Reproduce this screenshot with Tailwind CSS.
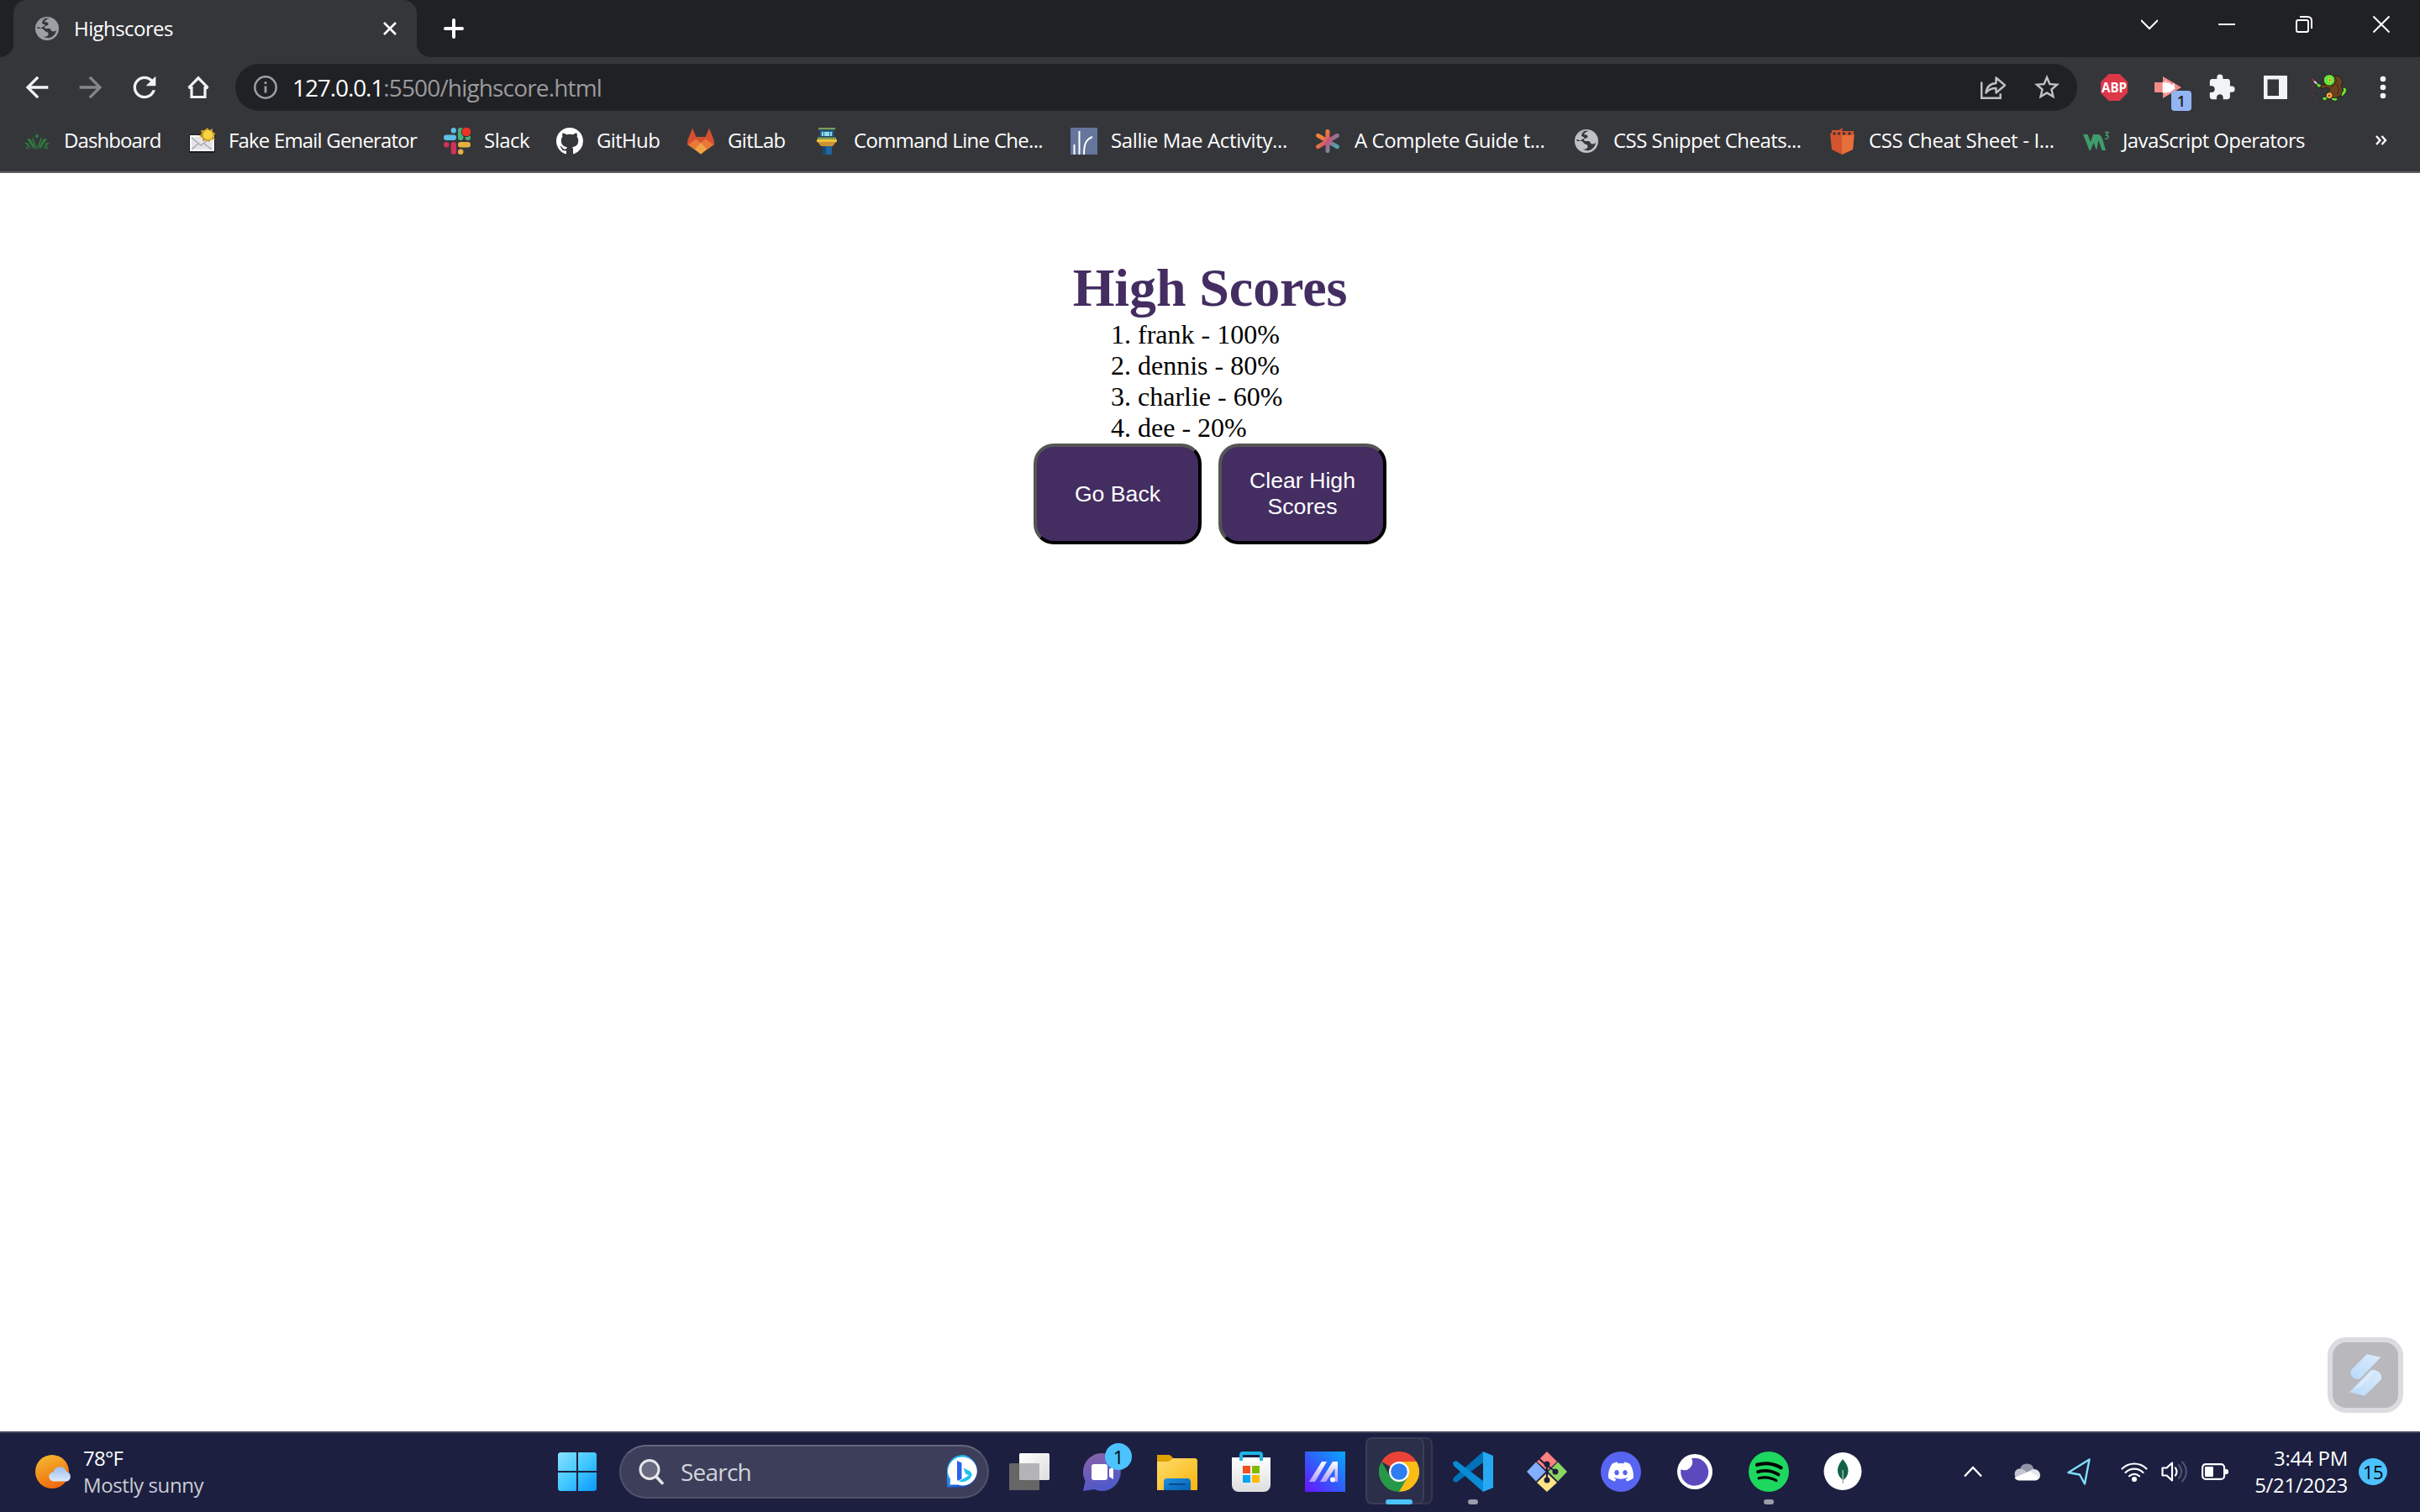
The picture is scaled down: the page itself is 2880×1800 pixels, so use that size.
<!DOCTYPE html>
<html lang="en">
<head>
<meta charset="utf-8">
<title>Highscores</title>
<script src="https://cdn.jsdelivr.net/npm/@tailwindcss/browser@4"></script>
</head>
<body class="flex h-[1800px] w-[2880px] flex-col overflow-hidden bg-white font-['Open_Sans','Noto_Sans',sans-serif] text-white">

<svg class="hidden">
  <symbol id="globe" viewBox="0 0 28 28">
    <circle cx="14" cy="14" r="14" fill="currentColor"/>
    <path class="fill-[#35363a]" d="M17 1.800c-2.500.6-5 2.200-6 4.200 1.500.6 4.500.2 4.500 2.500 0 2.500-3.500 1.500-4.500 3.500-.5 1.500 1 2 3 2h3.500c1 1.500 1.500 3.500 4 3.500 2 0 3.200-.8 3.700-2-.3 4-3.700 8.500-8.200 9.500-2 .5-5.500 0-7-1.500 3 .5 5.500-.5 5.500-3 0-2-1-2.500-3-3-2-.6-2-3-4.500-3.500H2.500C2.800 8 7 3 12 1.800z"/>
    <path fill="currentColor" d="M2.500 11.500C4 6 8 3 12 2.300c-2.500 1.500-4 3.700-4 5 0 2 3.500 1.200 3.500 2.700S8 11.500 7 13.800z"/>
  </symbol>
  <symbol id="cloud" viewBox="0 0 28 18"><path d="M6 17.500a5.500 5.500 0 0 1-.5-11A8 8 0 0 1 21 6a6 6 0 0 1 1 11.500z"/></symbol>
</svg>

<!-- Tab strip -->
<header class="flex h-[68px] items-center bg-[#202124]">
  <div class="flex h-full w-4 items-end bg-[#35363a]"><div class="h-full w-full rounded-br-2xl bg-[#202124]"></div></div>
  <div class="flex h-full w-[480px] items-center rounded-t-2xl bg-[#35363a] pl-[26px] pr-6">
    <svg class="mr-[18px] size-7 text-[#9aa0a6]"><use href="#globe"/></svg>
    <span class="-mt-px text-[24px] tracking-[-0.570px]">Highscores</span>
    <svg class="ml-auto size-[16px]" viewBox="0 0 16 16" stroke="#fff" stroke-width="2.600"><path d="M1 1l14 14M15 1L1 15"/></svg>
  </div>
  <div class="h-full w-4 bg-[#35363a]"><div class="h-full w-full rounded-bl-2xl bg-[#202124]"></div></div>
  <svg class="ml-4 size-6" viewBox="0 0 24 24" stroke="#fff" stroke-width="4" stroke-linecap="round"><path d="M12 2v20M2 12h20"/></svg>
  <div class="ml-auto flex -translate-y-[5px] items-center gap-[72px] pr-9">
    <svg class="size-5" viewBox="0 0 20 20" fill="none" stroke="#fff" stroke-width="2"><path d="M0 5l10 10L20 5"/></svg>
    <svg class="size-5" viewBox="0 0 20 20" fill="none" stroke="#fff" stroke-width="2"><path d="M0 10h20"/></svg>
    <svg class="size-5" viewBox="0 0 20 20" fill="none" stroke="#fff" stroke-width="2"><rect x="1" y="5" width="14" height="14" rx="2"/><path d="M5 1h9.500a4.500 4.500 0 0 1 4.500 4.500V15"/></svg>
    <svg class="size-5" viewBox="0 0 20 20" fill="none" stroke="#fff" stroke-width="2"><path d="M.5.5l19 19M19.500.5l-19 19"/></svg>
  </div>
</header>

<!-- Toolbar -->
<nav class="flex h-[72px] items-center bg-[#35363a] pl-6">
  <div class="flex w-64 gap-6">
    <svg class="size-10 fill-[#f1f3f4]" viewBox="0 0 24 24"><path d="M20 11H7.830l5.590-5.590L12 4l-8 8 8 8 1.410-1.410L7.830 13H20v-2z"/></svg>
    <svg class="size-10 fill-[#85868a]" viewBox="0 0 24 24"><path d="M4 11h12.170l-5.590-5.590L12 4l8 8-8 8-1.410-1.410L16.170 13H4v-2z"/></svg>
    <svg class="size-10 fill-[#f1f3f4]" viewBox="0 0 24 24"><path d="M17.650 6.350A7.958 7.958 0 0 0 12 4c-4.420 0-7.990 3.580-7.990 8s3.570 8 7.990 8c3.730 0 6.840-2.550 7.730-6h-2.080A5.990 5.990 0 0 1 12 18c-3.310 0-6-2.690-6-6s2.690-6 6-6c1.660 0 3.140.69 4.220 1.780L13 11h7V4l-2.350 2.350z"/></svg>
    <svg class="size-10" viewBox="0 0 40 40" fill="none" stroke="#f1f3f4" stroke-width="3.200"><path d="M8.500 20.500L20 8.800l11.500 11.700M8.500 20.500h3.500v11h16v-11h3.500" stroke-linejoin="miter"/></svg>
  </div>
  <div class="flex h-14 w-[2192px] items-center rounded-full bg-[#202124] pl-[22px] pr-[18px]">
    <svg class="mr-[18px] size-7" viewBox="0 0 28 28" fill="none" stroke="#9aa0a6" stroke-width="2.500"><circle cx="14" cy="14" r="12.700"/><path d="M14 12.500v8M14 7.300v2.700" stroke-width="2.800"/></svg>
    <span class="-mt-px text-[28px] tracking-[-1.100px]">127.0.0.1</span><span class="-mt-px text-[28px] tracking-[-0.840px] text-[#9a9b9d]">:5500/highscore.html</span>
    <svg class="ml-auto mr-[30px] size-8" viewBox="0 0 32 32" fill="none" stroke="#c0c1c4" stroke-width="2.400"><path d="M2.200 9.500v19.300h22.500v-5.500"/><path d="M7.500 22.500c.8-7 5-11 12-11.500V4.500L30 13.500l-10.500 9v-5.500c-6 0-9 1.500-12 5.500z" stroke-linejoin="round"/></svg>
    <svg class="size-9 fill-[#c0c1c4]" viewBox="0 0 24 24"><path d="M22 9.240l-7.190-.62L12 2 9.190 8.630 2 9.240l5.460 4.730L5.820 21 12 17.270 18.180 21l-1.630-7.030L22 9.240zM12 15.400l-3.760 2.270 1-4.280-3.320-2.880 4.380-.38L12 6.100l1.710 4.040 4.380.38-3.320 2.880 1 4.280L12 15.400z"/></svg>
  </div>
  <div class="ml-7 flex items-center gap-8">
    <svg class="size-8" viewBox="0 0 32 32"><path fill="#dc3848" d="M9.500 0h13L32 9.500v13L22.500 32h-13L0 22.500v-13z"/><text x="16" y="22" fill="#fff" font-size="16" font-weight="700" text-anchor="middle" textLength="30" lengthAdjust="spacingAndGlyphs" font-family="Open Sans">ABP</text></svg>
    <div class="relative size-8">
      <svg class="size-8" viewBox="0 0 32 32"><path fill="#f28b88" d="M0 10h10V3l22 13-22 13v-7H0z"/><path fill="#f7b5b3" d="M9 10l6-3v18l-6-3z"/><path fill="#fff" d="M10 10.500h8l3 3 2-3 1.500 7L18 22h-8z"/></svg>
      <div class="absolute left-5 top-5 flex h-6 w-6 items-center justify-center rounded bg-[#93b4f3] text-[18px] font-semibold leading-none text-[#202124]">1</div>
    </div>
    <svg class="-ml-px size-[34px]" viewBox="0 0 24 24" fill="#f1f3f4"><path d="M20.500 11H19V7c0-1.100-.9-2-2-2h-4V3.500a2.500 2.500 0 0 0-5 0V5H4c-1.100 0-1.990.9-1.990 2v3.800H3.500c1.490 0 2.700 1.210 2.700 2.700s-1.210 2.700-2.700 2.700H2V20c0 1.100.9 2 2 2h3.800v-1.500c0-1.490 1.210-2.700 2.700-2.700s2.700 1.210 2.700 2.700V22H17c1.100 0 2-.9 2-2v-4h1.500a2.500 2.500 0 0 0 0-5z"/></svg>
    <svg class="ml-px size-7" viewBox="0 0 28 28"><path fill="#f1f3f4" fill-rule="evenodd" d="M0 0h28v28H0zM4.500 4.500v19.500H18V4.500z"/></svg>
    <svg class="-ml-1 h-9 w-[42px]" viewBox="60 18 126 108" stroke-linejoin="round">
      <g stroke="#1a1208" stroke-width="2">
        <path fill="#69e33c" d="M168 92l8-8-2-8 6-4 8 6-2 12-10 12-8 2zM100 108l16-3 2 11-12 4zM132 108l20 0 4 8-8 5-12-3zM80 62l6-4 12 4 0 8-12 3z"/>
        <path fill="#6b4220" d="M144 30l14 2 12 10 4 12-6 10 6 20-6 16-18 10-20-2-14-8 4-10 10-10-6-6-12-1-10 4-6-3 1-12 22 1 6-6 14-10z"/>
        <ellipse cx="126" cy="46" rx="20" ry="20" fill="#69e33c"/>
      </g>
      <path fill="none" stroke="#3c230e" stroke-width="3" d="M146 34l6 14-6 14-14 10M152 60l8 16-4 20"/>
      <path stroke="#d8d8dc" stroke-width="6" d="M72 50l10 9"/><path stroke="#e22" stroke-width="5" d="M65 42l6 6"/>
      <path stroke="#c22" stroke-width="3" d="M67 66v5M70 80v4M67 97v5M73 109l5 3"/>
      <circle cx="128" cy="46" r="6" fill="#f3d94a"/><circle cx="128" cy="46" r="2.500" fill="#222"/>
      <circle cx="126" cy="101" r="9.500" fill="#f2c84c"/><circle cx="126" cy="101" r="4.500" fill="#d22"/>
    </svg>
    <svg class="-ml-1 size-8" viewBox="0 0 32 32" fill="#f1f3f4"><circle cx="16" cy="6" r="3.300"/><circle cx="16" cy="16" r="3.300"/><circle cx="16" cy="26" r="3.300"/></svg>
  </div>
</nav>

<!-- Bookmarks -->
<nav class="flex h-[66px] items-center border-b-2 border-[#5f6063] bg-[#35363a] pb-2 pl-7 text-[24px] whitespace-nowrap">
  <a class="flex w-[196px] shrink-0 items-center gap-4">
    <svg class="size-8 shrink-0" viewBox="0 0 32 32" fill="#2d7a3c"><path d="M16 7l2.500 3-2.500 3-2.500-3zM14.800 26L10 13l1.500-1 4.200 12zM17.200 26L22 13l-1.500-1-4.200 12zM12.500 26L4 13.500l4-.5 5 9zM19.500 26L28 13.500l-4-.5-5 9zM9.500 26L1 18h4zM22.500 26L31 18h-4zM7 26l-5-2 2-2zM25 26l5-2-2-2z"/></svg>
    <span class="-mt-0.5 tracking-[-0.930px]">Dashboard</span></a>
  <a class="flex w-[304px] shrink-0 items-center gap-4">
    <svg class="size-8 shrink-0" viewBox="0 0 32 32"><path fill="#1b1b1b" d="M1 8h31v22H1z"/><path fill="#fff" d="M2 9h29v19H2z"/><path fill="#e4e4e8" d="M4 11h25v15H4z"/><path fill="none" stroke="#a8a8ae" stroke-width="1.500" d="M4 12l11 9 12-9M4 26l8-7M28 26l-9-7"/><path fill="#c99a1e" d="M23 0l2 3 4-2 0 4 4 2-3 3 2 4-5 0-2 3-4-2-4 1 0-4-4-2 3-3-1-4 4 0z"/><circle cx="23.500" cy="8.500" r="5.800" fill="#f5d547"/></svg>
    <span class="-mt-0.5 tracking-[-0.820px]">Fake Email Generator</span></a>
  <a class="flex w-[134px] shrink-0 items-center gap-4">
    <svg class="size-8 shrink-0" viewBox="0 0 32 32"><g fill="#5ebfe9"><rect x="8.700" y="0" width="6.200" height="6.500" rx="3.100"/><rect x="0" y="8.500" width="15" height="6.600" rx="3.300"/></g><g fill="#45b07c"><rect x="17" y="0" width="6.500" height="15" rx="3.200"/><rect x="25.500" y="8.500" width="6.500" height="6.500" rx="3.200"/></g><g fill="#e5b040"><rect x="17" y="17" width="15" height="6.500" rx="3.200"/><rect x="17" y="25.500" width="6.500" height="6.500" rx="3.200"/></g><g fill="#d0305a"><rect x="8.700" y="17" width="6.300" height="15" rx="3.200"/><rect x="0" y="17" width="6.500" height="6.500" rx="3.200"/></g><circle cx="27" cy="5" r="5.800" fill="#eb3223" stroke="#35363a" stroke-width="1"/></svg>
    <span class="-mt-0.5 tracking-[-0.500px]">Slack</span></a>
  <a class="flex w-[156px] shrink-0 items-center gap-4">
    <svg class="size-8 shrink-0 fill-white" viewBox="0 0 16 16"><path d="M8 0C3.580 0 0 3.580 0 8c0 3.540 2.290 6.530 5.470 7.590.4.070.55-.17.55-.38 0-.19-.01-.82-.01-1.490-2.010.37-2.530-.49-2.690-.94-.09-.23-.48-.94-.82-1.130-.28-.15-.68-.52-.01-.53.63-.01 1.080.58 1.230.82.72 1.210 1.870.87 2.330.66.070-.52.28-.87.51-1.070-1.780-.2-3.640-.89-3.640-3.950 0-.87.31-1.590.82-2.150-.08-.2-.36-1.020.08-2.120 0 0 .67-.21 2.200.82.64-.18 1.320-.27 2-.27s1.360.09 2 .27c1.530-1.040 2.200-.82 2.200-.82.44 1.100.16 1.920.08 2.120.51.56.82 1.270.82 2.150 0 3.070-1.870 3.750-3.650 3.950.29.25.54.73.54 1.480 0 1.070-.01 1.930-.01 2.200 0 .21.15.46.55.38A8.013 8.013 0 0 0 16 8c0-4.420-3.580-8-8-8z"/></svg>
    <span class="-mt-0.5 tracking-[-0.670px]">GitHub</span></a>
  <a class="flex w-[150px] shrink-0 items-center gap-4">
    <svg class="size-8 shrink-0" viewBox="0 0 32 32"><path fill="#e9783a" d="M0 20l3-9h26l3 9-16 11.500z"/><path fill="#d4502f" d="M6 .5L10.500 11h11L26 .5l5.500 14L32 18c0 1-.5 2-1 2.500L22 13.500 16 18l-6-4.500L1 20.500C0 19.500-.2 17 .5 14.500z"/><path fill="#efa446" d="M16 18l7 7.500-7 6-7-6z"/></svg>
    <span class="-mt-0.5 tracking-[-0.670px]">GitLab</span></a>
  <a class="flex w-[306px] shrink-0 items-center gap-4">
    <svg class="size-8 shrink-0" viewBox="0 0 32 32"><path fill="#7b9a58" d="M6 0h20v2.500H6z"/><path fill="#1e4a6d" d="M6 2.500h20V4H6z"/><path fill="#2a6a9a" d="M8 4h16v6H8z"/><path fill="#8fdcec" d="M10 5h2v5h-2zM13 5h6v5h-6zM20 5h2v5h-2z"/><path fill="#1c4568" d="M6 10h20v1.500H6z"/><path fill="#86a052" d="M5 11.500h22V14H5z"/><path fill="#efc03a" d="M4 14h24v3H4z"/><path fill="#cf9230" d="M5 17h22l-4 5H9z"/><path fill="#23659b" d="M11 22h11v10H11z"/><path fill="#174a77" d="M11 22h4v10h-4z"/></svg>
    <span class="-mt-0.5 tracking-[-0.700px]">Command Line Che...</span></a>
  <a class="flex w-[290px] shrink-0 items-center gap-4">
    <svg class="size-8 shrink-0" viewBox="0 0 32 32"><path fill="#65759b" d="M0 0h32v32H0z"/><g fill="none" stroke="#fff" stroke-width="2"><path d="M4.500 32V20M10.500 32V4M16 32c0-14 3-18 10-21" /></g></svg>
    <span class="-mt-0.5 tracking-[-0.360px]">Sallie Mae Activity...</span></a>
  <a class="flex w-[308px] shrink-0 items-center gap-4">
    <svg class="size-8 shrink-0" viewBox="0 0 32 32" fill="none" stroke-width="5" stroke-linecap="round"><defs><linearGradient id="ast" gradientUnits="userSpaceOnUse" x1="4" y1="6" x2="28" y2="24"><stop offset="0" stop-color="#f58a2c"/><stop offset=".3" stop-color="#ee7a3c"/><stop offset=".52" stop-color="#c9527a"/><stop offset=".9" stop-color="#4aa5b0"/></linearGradient></defs><path stroke="url(#ast)" d="M16.010 4.500L16 27.500M4.700 9.300l22.600 13.400M4.700 22.700L27.300 9.300"/></svg>
    <span class="-mt-0.5 tracking-[-0.450px]">A Complete Guide t...</span></a>
  <a class="flex w-[304px] shrink-0 items-center gap-4">
    <span class="flex size-8 shrink-0 items-center justify-center"><svg class="size-7 text-[#bdc1c6]"><use href="#globe"/></svg></span>
    <span class="-mt-0.5 tracking-[-0.540px]">CSS Snippet Cheats...</span></a>
  <a class="flex w-[302px] shrink-0 items-center gap-4">
    <svg class="size-8 shrink-0" viewBox="0 0 32 32"><path fill="#d4542f" d="M2 7l2-1V3h8l5-3-1 4h14v3l1 1-2 18-13 6-12-6z"/><path fill="#e5703a" d="M16 9h14l-1 17-13 6z"/><g fill="#35363a"><circle cx="7" cy="7" r="1.700"/><circle cx="12.500" cy="7" r="1.700"/><circle cx="18.500" cy="7" r="1.700"/><circle cx="25" cy="7" r="1.700"/></g></svg>
    <span class="-mt-0.5 tracking-[-0.350px]">CSS Cheat Sheet - I...</span></a>
  <a class="flex w-[280px] shrink-0 items-center gap-4">
    <svg class="size-8 shrink-0" viewBox="0 0 32 32"><path fill="#3f9c6c" d="M1 8h5.500l3.500 9L13 8h5c3 0 5 2 6 5l4 14h-4.500l-4-12L17 27l-3.500-9-3.500 9H8.500z"/><path fill="none" stroke="#3f9c6c" stroke-width="1.500" d="M27 5.500h4L28.500 9c4 0 3.500 5-1.500 4"/></svg>
    <span class="-mt-0.5 tracking-[-0.620px]">JavaScript Operators</span></a>
  <svg class="mb-0.5 ml-auto mr-[39px] h-3 w-3.5 shrink-0" viewBox="0 0 14 12" fill="none" stroke="#fff" stroke-width="2.400"><path d="M1 1l4.500 5L1 11M7.500 1L12 6l-4.500 5"/></svg>
</nav>

<!-- Page -->
<main class="relative flex grow flex-col items-center pt-[101px] font-['Liberation_Serif',serif] text-black">
  <h1 class="mb-px text-[64px] font-bold leading-[72px] tracking-[-0.100px] text-[#432d61]">High Scores</h1>
  <ol class="w-[252px] list-decimal pl-[40px] text-[32px] leading-[37px]">
    <li>frank - 100%</li><li>dennis - 80%</li><li>charlie - 60%</li><li>dee - 20%</li>
  </ol>
  <div class="flex gap-5 font-['Liberation_Sans',sans-serif] text-[26.667px] leading-[31px] text-white">
    <button class="h-[120px] w-[200px] rounded-[24px] border-4 border-b-black border-l-[#555] border-r-black border-t-[#555] bg-[#432d61]">Go Back</button>
    <button class="h-[120px] w-[200px] rounded-[24px] border-4 border-b-black border-l-[#555] border-r-black border-t-[#555] bg-[#432d61] px-6">Clear High Scores</button>
  </div>
  <div class="absolute bottom-[22px] right-5 flex size-[90px] items-center justify-center rounded-[22px] border-6 border-[#dcdce0] bg-[#b8b8bd]">
    <svg class="h-[50px] w-[38px]" viewBox="0 0 38 50"><defs><linearGradient id="fold" x1="1" y1="0" x2="0" y2="1"><stop offset="0" stop-color="#dcebfb"/><stop offset="1" stop-color="#b9dafa"/></linearGradient></defs><path fill="url(#fold)" d="M21 0l16.300 3.700L12.500 29.500C5 31-1.500 25 3 18z"/><path fill="url(#fold)" d="M26 18.700c7-.7 14.500 5 11.500 12L18 49.700 0 45.300z"/><path fill="#dcecfd" d="M14 33l14-14 3 1-16 17-10 5z"/></svg>
  </div>
</main>

<!-- Taskbar -->
<footer class="flex h-24 items-center border-t-2 border-[#44465c] bg-[#1c1f40] pb-0.5">
  <div class="flex w-[643px] items-center gap-3 pl-[42px]">
    <svg class="h-10 w-[46px]" viewBox="0 0 46 40"><defs><linearGradient id="sun" x1=".2" y1="0" x2=".6" y2="1"><stop offset="0" stop-color="#f3b92e"/><stop offset="1" stop-color="#f0680c"/></linearGradient><linearGradient id="cl" x1="0" y1="0" x2="0" y2="1"><stop offset="0" stop-color="#9dbdf0"/><stop offset="1" stop-color="#dceafc"/></linearGradient></defs><circle cx="20" cy="20" r="20" fill="url(#sun)"/><use href="#cloud" x="16" y="14" width="28" height="18" fill="url(#cl)"/></svg>
    <div class="-mt-px -ml-px flex flex-col text-[24px] leading-8"><span class="tracking-[-0.750px]">78°F</span><span class="tracking-[-0.400px] text-[#cbccd3]">Mostly sunny</span></div>
  </div>
  <div class="flex w-[94px] justify-center pr-1.5">
    <svg class="size-[46px]" viewBox="0 0 46 46"><defs><linearGradient id="win" gradientUnits="userSpaceOnUse" x1="0" y1="0" x2="46" y2="46"><stop offset="0" stop-color="#8ae0ff"/><stop offset=".5" stop-color="#42c8ff"/><stop offset="1" stop-color="#0a96ff"/></linearGradient></defs><path fill="url(#win)" d="M2 0h20v22H0V2zM24 0h20l2 2v20H24zM0 24h22v22H2l-2-2zM24 24h22v20l-2 2H24z"/></svg>
  </div>
  <div class="flex h-16 w-[440px] items-center rounded-full border-2 border-[#50526b] border-t-[#64667b] bg-[#3d3f5a] pl-[21px] pr-[9px]">
    <svg class="size-8" viewBox="0 0 32 32" fill="none" stroke="#e6e7ea" stroke-width="3" stroke-linecap="round"><circle cx="13" cy="13.500" r="11" fill="#686a80"/><path d="M21 22l7 7.500" stroke-width="3.600"/></svg>
    <span class="ml-[18px] text-[28px] tracking-[-0.800px] text-[#d4d5db]">Search</span>
    <svg class="ml-auto size-10" viewBox="0 0 40 40"><defs><linearGradient id="bg1" x1="0" y1="0" x2=".6" y2="1"><stop offset="0" stop-color="#12d0f5"/><stop offset=".5" stop-color="#2a9af5"/><stop offset="1" stop-color="#1747c8"/></linearGradient></defs><path fill="url(#bg1)" d="M20 0a19 19 0 1 1-5 38.500H1V20A19 19 0 0 1 20 0z"/><path fill="#fff" d="M20 2.500a17 17 0 1 1-6 33H4.500L5 29A17 17 0 0 1 20 2.500z"/><path fill="#2b62ee" d="M13 7l5.500 2.500v19L14 31l-1-2z"/><path fill="#1cc4ee" d="M20.500 15.500l8 4c3 3 2.500 6-.5 9-4 3-9 5-13 3l12-7-4-2z"/></svg>
  </div>
  <div class="flex pl-1 [&>div]:flex [&>div]:h-[94px] [&>div]:w-[88px] [&>div]:items-center [&>div]:justify-center [&_svg]:size-12 [&_svg]:shrink-0">
    <div><svg viewBox="0 0 48 48"><defs><linearGradient id="tv" x1="0" y1="0" x2="1" y2="1"><stop offset="0" stop-color="#fff"/><stop offset="1" stop-color="#ddd"/></linearGradient></defs><rect x="12" y="2" width="36" height="32" rx="1.500" fill="url(#tv)"/><rect y="14" width="36" height="32" rx="1.500" fill="#666"/><path fill="#b4b4b6" d="M12 14h24v20H13l-1-1z"/></svg></div>
    <div><div class="relative size-12"><svg viewBox="0 0 48 48"><defs><linearGradient id="tm" x1="0" y1="0" x2=".3" y2="1"><stop offset="0" stop-color="#8c62a8"/><stop offset="1" stop-color="#5059c9"/></linearGradient></defs><path fill="url(#tm)" d="M23 2a22.500 22.500 0 1 1-10 43L0 47l2.500-12A22.500 22.500 0 0 1 23 2z"/><rect x="10" y="15" width="19" height="19" rx="3" fill="#fff"/><path fill="#fff" d="M31 21l5-3v15l-5-3z"/></svg>
      <span class="absolute -top-2.5 left-[26px] flex size-8 items-center justify-center rounded-full bg-[#4cc2ff] text-[22px] leading-none text-black">1</span></div></div>
    <div><svg viewBox="0 0 48 48"><defs><linearGradient id="fo" x1="0" y1="0" x2="1" y2="1"><stop offset="0" stop-color="#ffdc6c"/><stop offset="1" stop-color="#f8b50c"/></linearGradient><linearGradient id="fb" x1="0" y1="0" x2="1" y2="1"><stop offset="0" stop-color="#1f8fe0"/><stop offset="1" stop-color="#0560b0"/></linearGradient></defs><path fill="#e0a000" d="M0 4h14c3 0 4 4 7 5v8H0z"/><path fill="url(#fo)" d="M0 12h14l5-4h27l2 2v36H0z"/><path fill="url(#fb)" d="M8 46V36a4 4 0 0 1 4-4h24a4 4 0 0 1 4 4v10z"/><path stroke="#044a8c" stroke-width="2" stroke-linecap="round" d="M15 39h18"/></svg></div>
    <div><svg viewBox="0 0 48 48"><defs><linearGradient id="st" x1="0" y1="0" x2="0" y2="1"><stop offset="0" stop-color="#fff"/><stop offset="1" stop-color="#ddd"/></linearGradient></defs><path fill="url(#st)" d="M1 7h46v33a8 8 0 0 1-8 8H9a8 8 0 0 1-8-8z"/><path fill="none" stroke="#1fb4e8" stroke-width="4" d="M12 11V4q0-2 2-2h20q2 0 2 2v7"/><path fill="#f25022" d="M14 17h9v9h-9z"/><path fill="#7fba00" d="M25 17h9v9h-9z"/><path fill="#00a4ef" d="M14 28h9v9h-9z"/><path fill="#ffb900" d="M25 28h9v9h-9z"/></svg></div>
    <div><svg viewBox="0 0 48 48"><defs><linearGradient id="as" x1="0" y1="1" x2="1" y2="0"><stop offset="0" stop-color="#6a12ff"/><stop offset=".4" stop-color="#3a50fb"/><stop offset="1" stop-color="#05a8fc"/></linearGradient><linearGradient id="al" x1="0" y1="0" x2="0" y2="1"><stop offset="0" stop-color="#fff"/><stop offset="1" stop-color="#b49cf8"/></linearGradient></defs><path fill="url(#as)" d="M0 0h48v48H0z"/><path fill="url(#al)" d="M20 12h6L12 36H5zM33 12h6v24h-3.500V20L25 36h-7z"/><circle cx="33" cy="33.500" r="3" fill="#fff"/></svg></div>
    <div class="relative">
      <span class="absolute left-3 top-1.5 h-20 w-[72px] rounded-lg border-2 border-[#343750] bg-[#25283f]"></span>
      <span class="absolute left-1 top-1.5 h-20 w-[70px] rounded-lg border-2 border-[#3a3d56] bg-[#2c2f49]"></span>
      <svg class="relative" viewBox="0 0 48 48"><path fill="#ea4335" d="M24 24L3.200 12a24 24 0 0 1 41.600 0z"/><path fill="#fbbc15" d="M24 24V12h20.800A24 24 0 0 1 24 48z"/><path fill="#279847" d="M24 48A24 24 0 0 1 3.200 12l10.400 18 20.800 0z"/><circle cx="24" cy="24" r="12" fill="#fff"/><circle cx="24" cy="24" r="9.800" fill="#2d7df0"/></svg>
      <span class="absolute bottom-2 left-7 h-1.5 w-8 rounded-full bg-[#4cc2ff]"></span></div>
    <div class="relative"><svg viewBox="0 0 48 48"><path fill="#0072b8" d="M0 35l4 2L36 13V0L1 31z"/><path fill="#0a8bd8" d="M0 13l4-2 32 24v13L1 17z"/><path fill="#27a9f2" d="M36 0l12 5v38l-12 5z"/></svg><span class="absolute bottom-2 left-[38px] h-1.5 w-3 rounded-full bg-[#9c9cab]"></span></div>
    <div><svg viewBox="0 0 48 48"><path fill="#ff8080" d="M24 0l12 12-11.500 11L12 12z"/><path fill="#82b0ff" d="M11 12.500L22.500 24 11 35.500 0 24z"/><path fill="#8cd561" d="M37 12.500L48 24 37 35.500 25.500 24z"/><path fill="#ffe484" d="M24 25.500L36 37 24 48 12 37z"/><g stroke="#1c1f40" stroke-width="2.200" fill="none"><path d="M14 8l10 9v17M25 17l9 7"/></g><g fill="#1c1f40"><circle cx="24" cy="15" r="3.500"/><circle cx="34" cy="24" r="3.500"/><circle cx="24" cy="34" r="3.500"/></g></svg></div>
    <div><svg viewBox="0 0 48 48"><circle cx="24" cy="24" r="24" fill="#5865f2"/><path fill="#fff" transform="translate(9 9) scale(1.250)" d="M20.317 4.370a19.791 19.791 0 0 0-4.885-1.515.074.074 0 0 0-.079.037c-.21.375-.444.864-.608 1.250a18.270 18.270 0 0 0-5.487 0 12.640 12.640 0 0 0-.617-1.250.077.077 0 0 0-.079-.037A19.736 19.736 0 0 0 3.677 4.370a.07.07 0 0 0-.032.027C.533 9.046-.32 13.580.099 18.057a.082.082 0 0 0 .031.057 19.900 19.900 0 0 0 5.993 3.030.078.078 0 0 0 .084-.028 14.090 14.090 0 0 0 1.226-1.994.076.076 0 0 0-.041-.106 13.107 13.107 0 0 1-1.872-.892.077.077 0 0 1-.008-.128 10.200 10.200 0 0 0 .372-.292.074.074 0 0 1 .077-.010c3.928 1.793 8.180 1.793 12.062 0a.074.074 0 0 1 .078.010c.12.098.246.198.373.292a.077.077 0 0 1-.006.127 12.299 12.299 0 0 1-1.873.892.077.077 0 0 0-.041.107c.36.698.772 1.362 1.225 1.993a.076.076 0 0 0 .084.028 19.839 19.839 0 0 0 6.002-3.030.077.077 0 0 0 .032-.054c.5-5.177-.838-9.674-3.549-13.660a.061.061 0 0 0-.031-.030zM8.020 15.330c-1.183 0-2.157-1.085-2.157-2.419 0-1.333.956-2.419 2.157-2.419 1.210 0 2.176 1.096 2.157 2.420 0 1.333-.956 2.418-2.157 2.418zm7.975 0c-1.183 0-2.157-1.085-2.157-2.419 0-1.333.955-2.419 2.157-2.419 1.210 0 2.176 1.096 2.157 2.420 0 1.333-.946 2.418-2.157 2.418z"/></svg></div>
    <div><svg viewBox="0 0 48 48"><circle cx="24" cy="24" r="21" fill="#fff"/><path fill="#5b49bd" d="M20 8.200a16.500 16.500 0 1 1-12.500 13A9.500 9.500 0 0 0 20 8.200z"/></svg></div>
    <div class="relative"><svg viewBox="0 0 48 48"><circle cx="24" cy="24" r="24" fill="#1ed75f"/><g fill="none" stroke="#000" stroke-linecap="round"><path stroke-width="4.200" d="M10 15.800c9-2.800 20-1.800 28.500 3.500"/><path stroke-width="3.800" d="M11 24.200c8-2.300 17-1.400 24.500 3.200"/><path stroke-width="3" d="M12 31.800c7-1.700 14.500-1 21 2.800"/></g></svg><span class="absolute bottom-2 left-[38px] h-1.5 w-3 rounded-full bg-[#9c9cab]"></span></div>
    <div><svg viewBox="0 0 48 48"><circle cx="24" cy="23.500" r="22.500" fill="#fff"/><path fill="#116149" d="M24 9c3 4 6.500 8 6.500 14 0 5-3 9-6 11-3-2-6.500-6-6.500-11C18 17 21 13 24 9z"/><path stroke="#9fb8ad" stroke-width="1.500" d="M24.200 22v16"/></svg></div>
  </div>
  <div class="ml-auto flex items-center pr-[39px]">
    <svg class="mr-[37px] h-3.5 w-[22px]" viewBox="0 0 22 14" fill="none" stroke="#fff" stroke-width="2.400"><path d="M1 12.500L11 2l10 10.500"/></svg>
    <svg class="mr-8 h-[22px] w-8" viewBox="0 0 32 22"><path fill="#9294a6" d="M8 8a8.500 8.500 0 0 1 16.500 0L16 14z"/><path fill="#c4c5d0" d="M7.500 21A7 7 0 0 1 6 7.600c3-.5 5 .2 7 1.600l9 7z"/><path fill="#e4e5ea" d="M15 13l6-4c5-3 11 1 11 6 0 2-.5 3.500-2 5z"/><path fill="#fff" d="M1.500 18L19 10.500 31 17.500c-1 2.500-2.500 4-5 4H7c-2.500 0-4.500-1.500-5.500-3.500z"/></svg>
    <svg class="mr-9 h-8 w-7" viewBox="0 0 28 32" fill="none" stroke="#7ee0fa" stroke-width="2.400" stroke-linejoin="round"><path d="M26.500 1.500L1.500 17 15 19.500l6 11z"/></svg>
    <svg class="mr-4 h-6 w-8" viewBox="0 0 32 24" fill="none" stroke="#fff" stroke-width="2.200" stroke-linecap="round"><path d="M1.500 8.500a20.500 20.500 0 0 1 29 0M5.500 13a14.800 14.800 0 0 1 21 0M10 17.300a8.800 8.800 0 0 1 12 0"/><circle cx="16" cy="21" r="2" fill="#fff"/></svg>
    <svg class="mr-4 h-7 w-8" viewBox="0 0 32 28" fill="none" stroke="#fff" stroke-width="2.200" stroke-linecap="round" stroke-linejoin="round"><path d="M1.500 9.500h5L13 3.500v21l-6.500-6h-5zM17 9.500c2 3 2 6 0 9"/><path stroke="#4f5270" d="M21 6c4 5 4 11 0 16M25 2.500c6.500 7 6.500 16 0 23"/></svg>
    <svg class="mr-[30px] h-5 w-8" viewBox="0 0 32 20"><rect x="1.100" y="1.100" width="26" height="17.800" rx="4" fill="none" stroke="#fff" stroke-width="2.200"/><rect x="4" y="4" width="10" height="12" rx="1" fill="#fff"/><path fill="#fff" d="M28 7h2.500l1.500 1.500v3L30.500 13H28z"/></svg>
    <div class="-mt-px flex w-28 flex-col items-end whitespace-nowrap text-[24px] leading-8"><span class="tracking-[-0.260px]">3:44 PM</span><span class="tracking-[-0.320px]">5/21/2023</span></div>
    <div class="ml-[13px] flex h-8 w-[34px] items-center justify-center rounded-[50%] bg-[#4cc2ff] text-[22px] leading-none tracking-tight text-black">15</div>
  </div>
</footer>
</body>
</html>
